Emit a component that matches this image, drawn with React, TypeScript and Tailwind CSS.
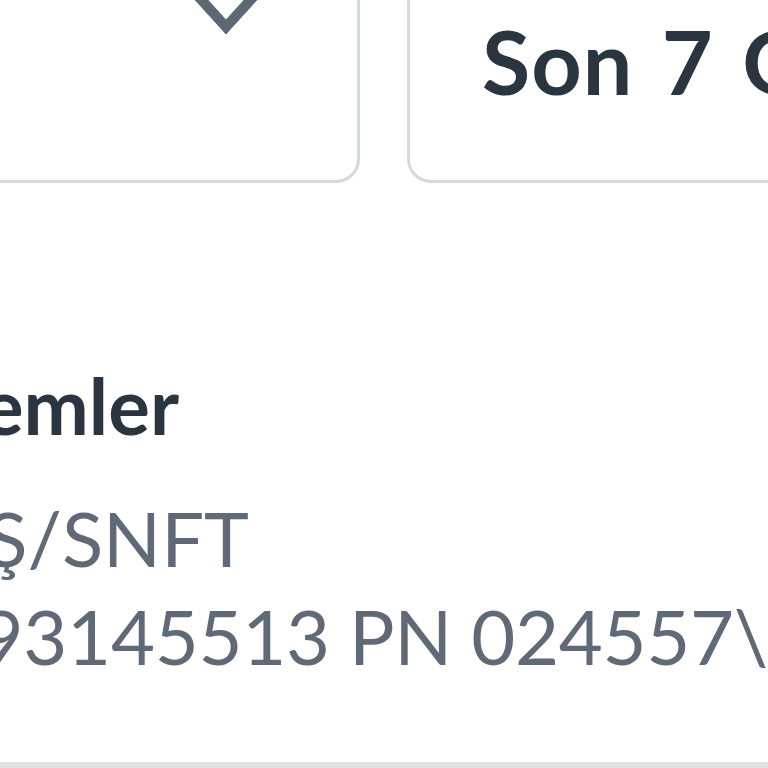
export default function App() {
  return (
    <div className="relative h-[768px] w-[768px] overflow-hidden bg-white font-['Lato','Noto_Sans',sans-serif]">
      {/* filter row */}
      <div className="-ml-[200px] -mt-[120px] flex gap-[47px]">
        <div className="flex h-[303px] w-[560px] shrink-0 items-start justify-end rounded-[24px] border-[3px] border-[#d6d9dc] pr-[96px] pt-[107px]">
          <svg width="70" height="50" viewBox="0 0 70 50" className="overflow-visible">
            <polygon
              points="0,-8.5 35,30 70,-8.5 70,5.4 35,43.9 0,5.4"
              fill="#5e6873"
              stroke="#5e6873"
              strokeLinejoin="round"
              strokeWidth="1"
            />
          </svg>
        </div>
        <div className="h-[303px] w-[560px] shrink-0 whitespace-nowrap rounded-[24px] border-[3px] border-[#d6d9dc] pl-[72px] pt-[134px] text-[88px] font-bold leading-none tracking-[1px] [word-spacing:6px] text-[#2b3540]">
          Son 7 Gün
        </div>
      </div>

      {/* recent transactions */}
      <div className="mt-[183px] flex w-[179px] justify-end">
        <div className="whitespace-nowrap text-[78px] font-bold leading-none text-[#2b3540]">
          Son İşlemler
        </div>
      </div>

      <div className="mt-[45px] text-[76px] leading-[98px] text-[#5f6a76]">
        <div className="flex w-[249px] justify-end">
          <div className="whitespace-nowrap">ALIŞVERİŞ/SNFT</div>
        </div>
        <div className="-ml-[108px] whitespace-nowrap tracking-[-0.3px]">
          4293145513 PN 024557\SNFT
        </div>
      </div>

      <div className="mt-[77px] h-[6px] w-full bg-[#e0e2e4]" />
    </div>
  );
}
